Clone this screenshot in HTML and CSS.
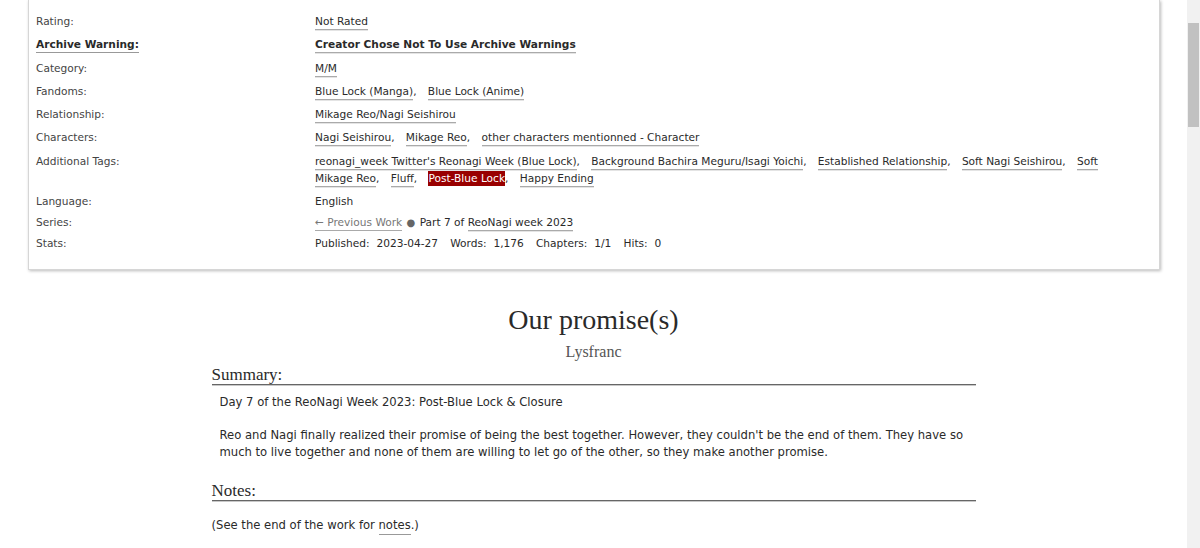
FILE: index.html
```html
<!DOCTYPE html>
<html>

<head>
    <title>Our promise(s) - Lysfranc</title>
    <meta charset="utf-8">
    <meta name="viewport" content="width=device-width, initial-scale=1">
    <link rel="stylesheet" href="styles.css">
</head>

<body>
<div id="page">

    <!-- Work meta -->
    <div class="meta-box">
        <dl class="work-meta">
            <dt>Rating:</dt>
            <dd class="tags">
                <ul>
                    <li><a class="tag">Not Rated</a></li>
                </ul>
            </dd>

            <dt class="warning"><a>Archive Warning:</a></dt>
            <dd class="tags warning">
                <ul>
                    <li><a class="tag">Creator Chose Not To Use Archive Warnings</a></li>
                </ul>
            </dd>

            <dt>Category:</dt>
            <dd class="tags">
                <ul>
                    <li><a class="tag">M/M</a></li>
                </ul>
            </dd>

            <dt>Fandoms:</dt>
            <dd class="tags">
                <ul>
                    <li><a class="tag">Blue Lock (Manga)</a></li>
                    <li><a class="tag">Blue Lock (Anime)</a></li>
                </ul>
            </dd>

            <dt>Relationship:</dt>
            <dd class="tags">
                <ul>
                    <li><a class="tag">Mikage Reo/Nagi Seishirou</a></li>
                </ul>
            </dd>

            <dt>Characters:</dt>
            <dd class="tags">
                <ul>
                    <li><a class="tag">Nagi Seishirou</a></li>
                    <li><a class="tag">Mikage Reo</a></li>
                    <li><a class="tag">other characters mentionned - Character</a></li>
                </ul>
            </dd>

            <dt>Additional Tags:</dt>
            <dd class="tags">
                <ul>
                    <li><a class="tag">reonagi_week Twitter's Reonagi Week (Blue Lock)</a></li>
                    <li><a class="tag">Background Bachira Meguru/Isagi Yoichi</a></li>
                    <li><a class="tag">Established Relationship</a></li>
                    <li><a class="tag">Soft Nagi Seishirou</a></li>
                    <li><a class="tag">Soft Mikage Reo</a></li>
                    <li><a class="tag">Fluff</a></li>
                    <li><a class="tag current"><mark>Post-Blue Lock</mark></a></li>
                    <li><a class="tag">Happy Ending</a></li>
                </ul>
            </dd>

            <dt>Language:</dt>
            <dd>English</dd>

            <dt>Series:</dt>
            <dd>
                <span class="series">
                    <a class="previous">&larr; Previous Work</a>
                    <span class="divider">&#9679;</span>
                    Part 7 of <a class="tag">ReoNagi week 2023</a>
                </span>
            </dd>

            <dt>Stats:</dt>
            <dd>
                <dl class="stats">
                    <dt>Published:</dt><dd>2023-04-27</dd>
                    <dt>Words:</dt><dd>1,176</dd>
                    <dt>Chapters:</dt><dd>1/1</dd>
                    <dt>Hits:</dt><dd>0</dd>
                </dl>
            </dd>
        </dl>
    </div>

    <!-- Preface -->
    <div class="preface">
        <h2 class="title">Our promise(s)</h2>
        <h3 class="byline">Lysfranc</h3>

        <div class="module summary">
            <h3 class="heading">Summary:</h3>
            <blockquote class="userstuff">
                <p>Day 7 of the ReoNagi Week 2023: Post-Blue Lock &amp; Closure</p>
                <p>Reo and Nagi finally realized their promise of being the best together. However, they couldn't be the end of them. They have so much to live together and none of them are willing to let go of the other, so they make another promise.</p>
            </blockquote>
        </div>

        <div class="module notes">
            <h3 class="heading">Notes:</h3>
            <p class="jump">(See the end of the work for <a>notes</a>.)</p>
        </div>
    </div>
</div>

<div class="scrollbar"><div class="thumb"></div></div>
</body>

</html>
```

FILE: styles.css
```css
html, body {
    margin: 0;
    height: 100%;
    overflow: hidden;
}

body {
    background-color: #fff;
    color: #2a2a2a;
    font-family: "DejaVu Sans", sans-serif;
}

#page {
    width: 1187px;
}

a {
    color: #2a2a2a;
    text-decoration: none;
}

/* meta box */

.meta-box {
    margin: 0 27px 0 28px;
    background-color: #fff;
    border: 1px solid #d6d6d6;
    border-top: none;
    box-shadow: 1px 1px 3px #bbb;
}

.work-meta {
    display: grid;
    grid-template-columns: 279px 1fr;
    row-gap: 4px;
    margin: 0;
    padding: 13px 39px 17px 7px;
    font-size: 10.6px;
    line-height: 17px;
}

.work-meta > dt {
    color: #444;
}

.work-meta > dd {
    margin: 0;
}

.work-meta .tags {
    padding-bottom: 2.3px;
}

.work-meta .warning {
    font-weight: bold;
    color: #2a2a2a;
}

.work-meta dt.warning a {
    padding-bottom: 2px;
    border-bottom: 1px solid #999;
}

.tags ul {
    margin: 0;
    padding: 0;
    list-style: none;
}

.tags li {
    display: inline;
}

.tags li::after {
    content: ",";
    margin-right: 0.75em;
}

.tags li:last-child::after {
    content: none;
}

.tag {
    padding-bottom: 2px;
    border-bottom: 1px solid #aaa;
    box-shadow: 0 1px 0 #e4e4e4;
}

.tag mark {
    background-color: #900;
    color: #fff;
    padding: 1px 0 2px;
}

.tag.current {
    border-bottom-color: transparent;
    box-shadow: none;
}

.series .previous {
    color: #777;
    padding-bottom: 2px;
    border-bottom: 1px solid #aaa;
}

.series .divider {
    font-size: 10px;
    color: #666;
    margin: 0 1px;
}

.stats {
    display: flex;
    margin: 0;
}

.stats dt {
    margin-right: 0.65em;
}

.stats dd {
    margin: 0 1.15em 0 0;
}

/* preface */

.preface {
    width: 764px;
    margin: 34px auto 0;
}

.title {
    margin: 0;
    font-family: "Liberation Serif", serif;
    font-size: 28px;
    line-height: 32px;
    font-weight: normal;
    text-align: center;
}

.byline {
    margin: 6px 0 0;
    font-family: "Liberation Serif", serif;
    font-size: 16px;
    line-height: 20px;
    font-weight: normal;
    color: #555;
    text-align: center;
}

.heading {
    margin: 4px 0 0;
    font-family: "Liberation Serif", serif;
    font-size: 17px;
    line-height: 18px;
    font-weight: normal;
    border-bottom: 1px solid #666;
    box-shadow: 0 1px 0 #c8c8c8;
}

.userstuff {
    margin: 9px 0 0 8px;
    font-size: 11.6px;
    line-height: 17px;
}

.userstuff p {
    margin: 0 0 16px;
}

.userstuff p:last-child {
    margin-bottom: 0;
}

.notes {
    margin-top: 21px;
}

.jump {
    margin: 16px 0 0;
    font-size: 11.6px;
    line-height: 17px;
}

.jump a {
    padding-bottom: 2px;
    border-bottom: 1px solid #999;
}

/* window scrollbar */

.scrollbar {
    position: fixed;
    top: 0;
    right: 0;
    width: 13px;
    height: 100%;
    background-color: #f1f1f1;
}

.thumb {
    margin: 23px 0 0 1px;
    width: 11px;
    height: 104px;
    background-color: #c1c1c1;
}
```
